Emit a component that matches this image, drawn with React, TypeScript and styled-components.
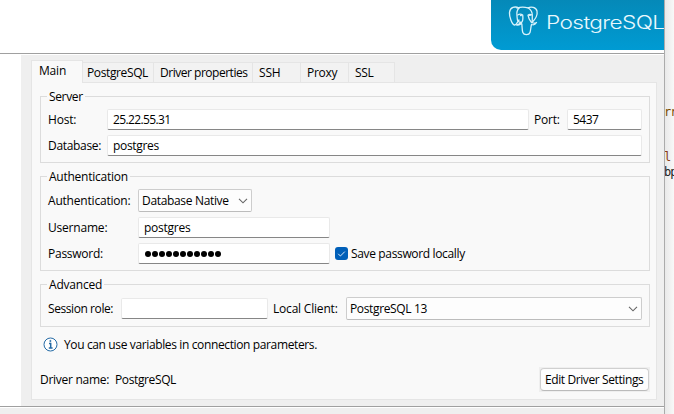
import React from "react";
import styled, { createGlobalStyle } from "styled-components";

const Global = createGlobalStyle`
  * { box-sizing: border-box; }
  body { margin: 0; background: #fff; overflow: hidden; }
`;

const Desktop = styled.div`
  display: flex;
  width: 674px;
  height: 414px;
  overflow: hidden;
  color: #000;
  font: 12px/16px "Open Sans", "Noto Sans", sans-serif;
`;

const Dialog = styled.div`
  display: flex;
  flex-direction: column;
  width: 665px;
  flex: none;
  border-right: 1px solid #ababab;
  background: #fff;
`;

const Header = styled.header`
  display: flex;
  justify-content: flex-end;
  height: 54px;
  flex: none;
  border-bottom: 1px solid #a0a0a0;
`;

const Banner = styled.div`
  display: flex;
  width: 173px;
  height: 50px;
  padding-left: 17px;
  overflow: hidden;
  border-bottom-left-radius: 10px;
  background: linear-gradient(#0589b8, #009bd3);
`;

const Elephant = styled.svg`
  flex: none;
  width: 32px;
  height: 32px;
  margin-top: 5px;
`;

const Wordmark = styled.span`
  margin: 11px 0 0 6px;
  color: #e9f8fd;
  font: 300 18px/24px Inter, sans-serif;
  letter-spacing: -0.5px;
  transform: scaleX(1.26);
  transform-origin: left;
`;

const Body = styled.main`
  display: flex;
  flex-direction: column;
  height: 351px;
  flex: none;
  margin: 1px 0 0 21px;
  padding: 5px 7px 0 10px;
  background: #efefef;
`;

const Tabs = styled.nav`
  display: flex;
  align-items: flex-end;
  height: 22px;
`;

const Tab = styled.div<{ $w: number; $active?: boolean; $pad?: number }>`
  position: relative;
  z-index: 1;
  width: ${(p) => p.$w}px;
  height: ${(p) => (p.$active ? 23 : 20)}px;
  margin-bottom: ${(p) => (p.$active ? -1 : 0)}px;
  padding: 2px 0 0 ${(p) => p.$pad ?? 6}px;
  border: 1px solid #e5e5e5;
  border-width: ${(p) => (p.$active ? "1px 1px 0 1px" : "1px 1px 0 0")};
  background: ${(p) => (p.$active ? "#f9f9f9" : "#f2f2f2")};
  white-space: nowrap;
`;

const Panel = styled.section`
  height: 318px;
  padding: 13px 6px 0 8px;
  border: 1px solid #e5e5e5;
  background: #f9f9f9;
`;

const Group = styled.section<{ $h: number; $gap?: number }>`
  height: ${(p) => p.$h}px;
  margin-bottom: ${(p) => p.$gap ?? 13}px;
  padding: 0 7px;
  border: 1px solid #dcdcdc;
`;

const Legend = styled.h2`
  width: max-content;
  height: 16px;
  margin: -8px 0 0 -1px;
  padding: 0 2px;
  background: #f9f9f9;
  font: inherit;
`;

const Row = styled.div<{ $top: number; $h?: number }>`
  display: flex;
  align-items: center;
  height: ${(p) => p.$h ?? 21}px;
  margin-top: ${(p) => p.$top}px;
`;

const Text = styled.span<{ $ls?: number }>`
  display: block;
  white-space: nowrap;
  letter-spacing: ${(p) => p.$ls ?? -0.2}px;
`;

const Label = styled.label<{ $w: number; $left?: number }>`
  flex: none;
  width: ${(p) => p.$w}px;
  margin-left: ${(p) => p.$left ?? 0}px;
`;

const Field = styled.div<{ $w: number }>`
  display: flex;
  align-items: center;
  flex: none;
  width: ${(p) => p.$w}px;
  height: 21px;
  padding-left: 5px;
  border: 1px solid #e9e9e9;
  border-bottom-color: #868686;
  border-radius: 2px;
  background: #fff;
`;

const Combo = styled.div<{ $w: number }>`
  display: flex;
  align-items: center;
  justify-content: space-between;
  flex: none;
  width: ${(p) => p.$w}px;
  height: 23px;
  padding: 0 3px 0 3px;
  border: 1px solid #cdcdcd;
  border-bottom-color: #bcbcbc;
  border-radius: 2px;
  background: #fdfdfd;
`;

const Dots = styled.div`
  display: flex;
  gap: 1px;
  margin-left: 0.7px;
`;

const Dot = styled.i`
  width: 6px;
  height: 6px;
  border-radius: 50%;
  background: #000;
`;

const Check = styled.div`
  display: flex;
  width: 13px;
  height: 13px;
  margin: -1px 3px 0 5px;
  border-radius: 3px;
  background: #005fb8;
`;

const Info = styled.div`
  display: flex;
  align-items: center;
  gap: 6px;
  height: 16px;
  margin: 10px 0 0 3px;

  svg {
    margin-top: -2px;
  }
`;

const Footer = styled.footer`
  display: flex;
  align-items: center;
  height: 25px;
  margin-top: 14px;
`;

const ButtonWell = styled.div`
  margin-left: auto;
  padding: 1px;
  background: #efefef;
`;

const Button = styled.button`
  display: flex;
  align-items: center;
  width: 109px;
  height: 23px;
  padding: 0 0 0 4px;
  border: 1px solid #d0d0d0;
  border-bottom-color: #bbb;
  border-radius: 4px;
  background: #fdfdfd;
  color: #000;
  font: inherit;
`;

const BottomEdge = styled.div`
  height: 8px;
  border-top: 1px solid #a0a0a0;
  background: #efefef;
  box-shadow: inset 0 1px #fff;
`;

const Editor = styled.aside`
  flex: 1;
  padding-top: 105px;
  overflow: hidden;
  background: linear-gradient(90deg, #e9e9e9, #f8f8f8);
  font: 12px/15px "DejaVu Sans Mono", monospace;
`;

const CodeLine = styled.div<{ $top?: number; $color?: string }>`
  margin-top: ${(p) => p.$top ?? 0}px;
  color: ${(p) => p.$color ?? "#222"};
  letter-spacing: -1px;
  text-indent: -1px;
`;

const Chevron = () => (
  <svg width="10" height="6" viewBox="0 0 10 6" fill="none" stroke="#666" strokeWidth="1.1">
    <path d="M1 .8 5 4.8 9 .8" />
  </svg>
);

const tabs: { name: string; w: number; ls: number; pad: number }[] = [
  { name: "PostgreSQL", w: 71, ls: -0.38, pad: 4 },
  { name: "Driver properties", w: 99, ls: -0.48, pad: 6 },
  { name: "SSH", w: 48, ls: -0.2, pad: 6 },
  { name: "Proxy", w: 48, ls: -0.3, pad: 6 },
  { name: "SSL", w: 46, ls: -0.3, pad: 6 },
];

export default function App() {
  return (
    <Desktop>
      <Global />
      <Dialog>
        <Header>
          <Banner>
            <Elephant viewBox="0 0 32 32" fill="none" stroke="#d8f2fb" strokeWidth="1.3" strokeLinecap="round" strokeLinejoin="round">
              <path d="M11 3C7 1 2 2 1.500 7.500c-.3 4.500 2.500 12 5 12.500 1.800.3 3-3 4.500-5" />
              <path d="M11 3c-2 2-2.500 5-2 8 .4 3-.5 6 4.500 6.500" />
              <path d="M9 3.200c4-1.700 8-1.200 11-.4 3-1.300 8-.8 9 3.200.8 4-2.500 9-5 11.500" />
              <path d="M20 2.800c3 2 4.500 5 4.300 8-.2 3 .3 4.500-.3 6.700 1.500.8 3 .8 4.500 0-1.200 2-3.600 2.500-5 2-.8 3-.8 6-1.500 8-1 2.800-6 3-7.200 0-.8-2-.6-6-1-8.500-.4-1.300-2.500 2-5.300.8 2-.3 3.500-.6 4-2.300" />
              <path d="M13.500 17.500c2-2 1.500-4.500 1.200-7.500-1.500-1-3.500-1-5 0M24 10c-1.500-.8-3-.7-4 .2.400 3 1.500 5 3.500 7.300" />
              <path d="M12.500 10.500h.8M21.500 10.300h.8" />
            </Elephant>
            <Wordmark>PostgreSQL</Wordmark>
          </Banner>
        </Header>
        <Body>
          <Tabs>
            <Tab $w={52} $active $pad={7}><Text>Main</Text></Tab>
            {tabs.map((t) => (
              <Tab key={t.name} $w={t.w} $pad={t.pad}><Text $ls={t.ls}>{t.name}</Text></Tab>
            ))}
          </Tabs>
          <Panel>
            <Group $h={67}>
              <Legend><Text $ls={-0.35}>Server</Text></Legend>
              <Row $top={4}>
                <Label $w={59}><Text>Host:</Text></Label>
                <Field $w={422}><Text $ls={-0.62}>25.22.55.31</Text></Field>
                <Label $w={33} $left={5}><Text>Port:</Text></Label>
                <Field $w={75}><Text $ls={-0.5}>5437</Text></Field>
              </Row>
              <Row $top={5}>
                <Label $w={59}><Text $ls={-0.32}>Database:</Text></Label>
                <Field $w={535}><Text $ls={-0.32}>postgres</Text></Field>
              </Row>
            </Group>
            <Group $h={95}>
              <Legend><Text $ls={-0.25}>Authentication</Text></Legend>
              <Row $top={4} $h={23}>
                <Label $w={90}><Text>Authentication:</Text></Label>
                <Combo $w={114}><Text $ls={-0.33}>Database Native</Text><Chevron /></Combo>
              </Row>
              <Row $top={5}>
                <Label $w={90}><Text>Username:</Text></Label>
                <Field $w={192}><Text $ls={-0.25}>postgres</Text></Field>
              </Row>
              <Row $top={5}>
                <Label $w={90}><Text $ls={-0.25}>Password:</Text></Label>
                <Field $w={192}>
                  <Dots>{Array.from({ length: 11 }, (_, i) => <Dot key={i} />)}</Dots>
                </Field>
                <Check>
                  <svg width="13" height="13" viewBox="0 0 13 13" fill="none" stroke="#d9e9f7">
                    <path d="M3.200 6.800 5.400 9 9.800 4.600" />
                  </svg>
                </Check>
                <Text $ls={-0.35}>Save password locally</Text>
              </Row>
            </Group>
            <Group $h={43} $gap={0}>
              <Legend><Text>Advanced</Text></Legend>
              <Row $top={4} $h={23}>
                <Label $w={73}><Text $ls={-0.42}>Session role:</Text></Label>
                <Field $w={147} />
                <Label $w={73} $left={5}><Text>Local Client:</Text></Label>
                <Combo $w={296}><Text $ls={-0.36}>PostgreSQL 13</Text><Chevron /></Combo>
              </Row>
            </Group>
            <Info>
              <svg width="15" height="15" viewBox="0 0 15 15" fill="none" stroke="#246aa5">
                <circle cx="7.500" cy="7.500" r="6.500" fill="#fff" />
                <path d="M6 6.500h1.700V11M5.800 11h3.800" strokeWidth="1.500" />
                <circle cx="7.400" cy="4" r=".7" fill="#246aa5" strokeWidth=".6" />
              </svg>
              <Text $ls={-0.37}>You can use variables in connection parameters.</Text>
            </Info>
            <Footer>
              <Label $w={75}><Text $ls={-0.28}>Driver name:</Text></Label>
              <Text $ls={-0.38}>PostgreSQL</Text>
              <ButtonWell><Button><Text $ls={-0.4}>Edit Driver Settings</Text></Button></ButtonWell>
            </Footer>
          </Panel>
        </Body>
        <BottomEdge />
      </Dialog>
      <Editor>
        <CodeLine $color="#7a4a00">rr</CodeLine>
        <CodeLine $top={30} $color="#8a3a10">l</CodeLine>
        <CodeLine>bp</CodeLine>
      </Editor>
    </Desktop>
  );
}
